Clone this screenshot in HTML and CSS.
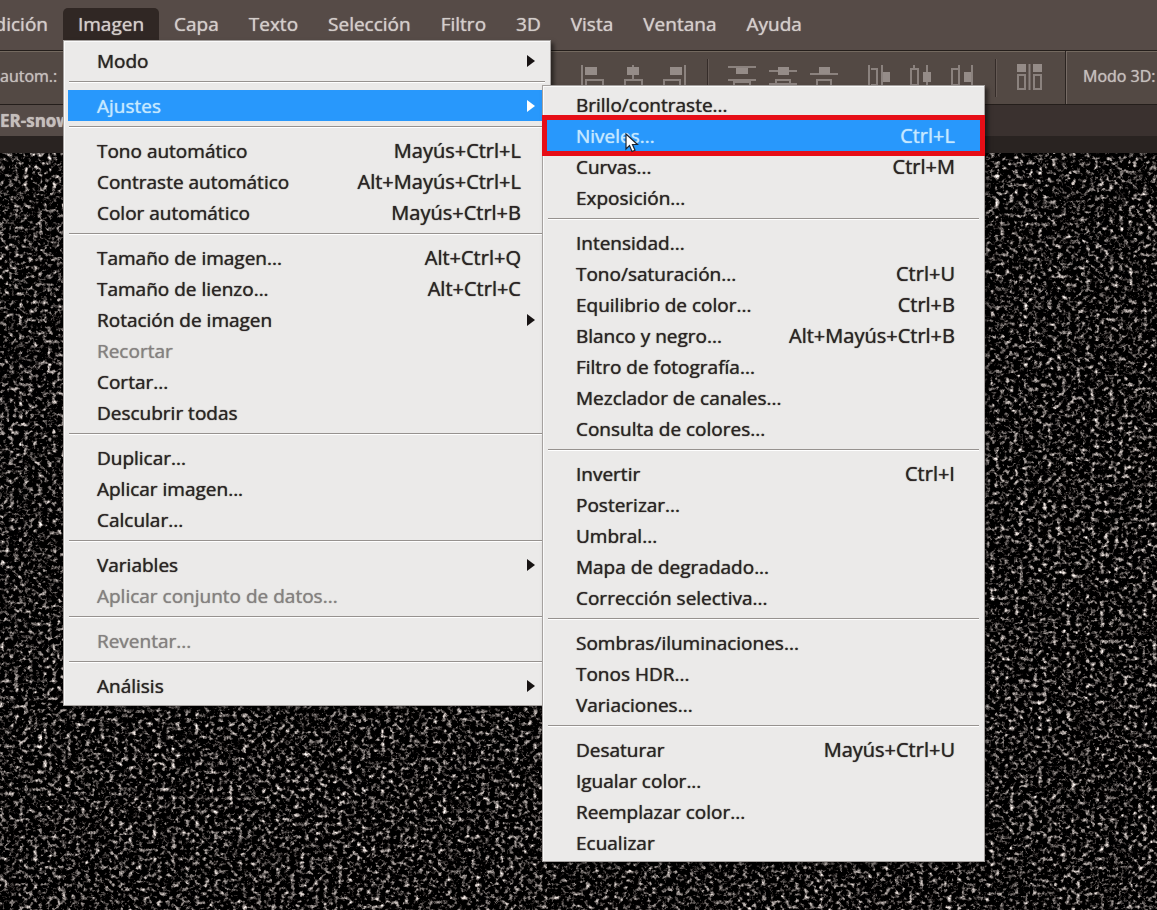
FILE: index.html
```html
<!DOCTYPE html>
<html lang="es">
<head>
<meta charset="utf-8">
<title>Imagen – Ajustes – Niveles</title>
<link rel="stylesheet" href="styles.css">
</head>
<body>
<div class="app">
  <nav class="menubar">
    <button class="menubar-item">Edición</button>
    <div class="menubar-group">
      <button class="menubar-item open">Imagen</button>
      <div class="menu main-menu">
        <button class="row">Modo<i class="arrow"></i></button>
        <hr>
        <div class="row-group">
          <button class="row active">Ajustes<i class="arrow"></i></button>
          <div class="menu sub-menu">
            <button class="row">Brillo/contraste...</button>
            <button class="row active marked">Niveles...<kbd>Ctrl+L</kbd>
              <svg class="pointer" width="14" height="20" viewBox="0 0 14 20"><path d="M1 1v15l3.500-3.500 2.500 6 3-1.300-2.500-5.700h5z" fill="#fff" stroke="#1c2430" stroke-width="1.200"/></svg>
            </button>
            <button class="row">Curvas...<kbd>Ctrl+M</kbd></button>
            <button class="row">Exposición...</button>
            <hr>
            <button class="row">Intensidad...</button>
            <button class="row">Tono/saturación...<kbd>Ctrl+U</kbd></button>
            <button class="row">Equilibrio de color...<kbd>Ctrl+B</kbd></button>
            <button class="row">Blanco y negro...<kbd>Alt+Mayús+Ctrl+B</kbd></button>
            <button class="row">Filtro de fotografía...</button>
            <button class="row">Mezclador de canales...</button>
            <button class="row">Consulta de colores...</button>
            <hr>
            <button class="row">Invertir<kbd>Ctrl+I</kbd></button>
            <button class="row">Posterizar...</button>
            <button class="row">Umbral...</button>
            <button class="row">Mapa de degradado...</button>
            <button class="row">Corrección selectiva...</button>
            <hr>
            <button class="row">Sombras/iluminaciones...</button>
            <button class="row">Tonos HDR...</button>
            <button class="row">Variaciones...</button>
            <hr>
            <button class="row">Desaturar<kbd>Mayús+Ctrl+U</kbd></button>
            <button class="row">Igualar color...</button>
            <button class="row">Reemplazar color...</button>
            <button class="row">Ecualizar</button>
          </div>
        </div>
        <hr>
        <button class="row">Tono automático<kbd>Mayús+Ctrl+L</kbd></button>
        <button class="row">Contraste automático<kbd>Alt+Mayús+Ctrl+L</kbd></button>
        <button class="row">Color automático<kbd>Mayús+Ctrl+B</kbd></button>
        <hr>
        <button class="row">Tamaño de imagen...<kbd>Alt+Ctrl+Q</kbd></button>
        <button class="row">Tamaño de lienzo...<kbd>Alt+Ctrl+C</kbd></button>
        <button class="row">Rotación de imagen<i class="arrow"></i></button>
        <button class="row" disabled>Recortar</button>
        <button class="row">Cortar...</button>
        <button class="row">Descubrir todas</button>
        <hr>
        <button class="row">Duplicar...</button>
        <button class="row">Aplicar imagen...</button>
        <button class="row">Calcular...</button>
        <hr>
        <button class="row">Variables<i class="arrow"></i></button>
        <button class="row" disabled>Aplicar conjunto de datos...</button>
        <hr>
        <button class="row" disabled>Reventar...</button>
        <hr>
        <button class="row">Análisis<i class="arrow"></i></button>
      </div>
    </div>
    <button class="menubar-item">Capa</button>
    <button class="menubar-item">Texto</button>
    <button class="menubar-item">Selección</button>
    <button class="menubar-item">Filtro</button>
    <button class="menubar-item">3D</button>
    <button class="menubar-item">Vista</button>
    <button class="menubar-item">Ventana</button>
    <button class="menubar-item">Ayuda</button>
  </nav>

  <div class="options">
    <span class="auto-label">autom.:</span>
    <div class="tools">
      <button class="tool" aria-label="Alinear bordes izquierdos"><svg viewBox="0 0 30 28"><path class="ln" d="M5 1v26M9 27v-11h17v11"/><path class="fl" d="M8 3h12v8H8z"/></svg></button>
      <button class="tool" aria-label="Alinear centros horizontales"><svg viewBox="0 0 30 28"><path class="ln" d="M15 1v15M7 27v-11h17v11"/><path class="fl" d="M9 3h12v8H9z"/></svg></button>
      <button class="tool" aria-label="Alinear bordes derechos"><svg viewBox="0 0 30 28"><path class="ln" d="M26 1v26M5 27v-11h16v11"/><path class="fl" d="M11 3h12v8H11z"/></svg></button>
    </div>
    <span class="divider"></span>
    <div class="tools">
      <button class="tool" aria-label="Distribuir bordes superiores"><svg viewBox="0 0 30 28"><path class="ln" d="M1 3h28M1 16h28M7 27v-9h16v9"/><path class="fl" d="M9 4h12v6H9z"/></svg></button>
      <button class="tool" aria-label="Distribuir centros verticales"><svg viewBox="0 0 30 28"><path class="ln" d="M1 7h28M1 20h28M8 27v-11h14v11"/><path class="fl" d="M10 3h11v8H10z"/></svg></button>
      <button class="tool" aria-label="Distribuir bordes inferiores"><svg viewBox="0 0 30 28"><path class="ln" d="M1 10h28M8 27v-11h14v11"/><path class="fl" d="M10 3h11v7H10z"/></svg></button>
    </div>
    <div class="tools last">
      <button class="tool" aria-label="Distribuir bordes izquierdos"><svg viewBox="0 0 30 28"><path class="ln" d="M4 1v26M17 1v26M6 5h6v16H6"/><path class="fl" d="M18 8h7v10h-7z"/></svg></button>
      <button class="tool" aria-label="Distribuir centros horizontales"><svg viewBox="0 0 30 28"><path class="ln" d="M8 1v4M8 21v6M21 1v26M5 5h7v16H5z"/><path class="fl" d="M17 8h8v10h-8z"/></svg></button>
      <button class="tool" aria-label="Distribuir bordes derechos"><svg viewBox="0 0 30 28"><path class="ln" d="M12 1v26M25 1v26M11 5H5v16h6"/><path class="fl" d="M17 8h7v10h-7z"/></svg></button>
    </div>
    <span class="divider"></span>
    <button class="tool auto-align" aria-label="Alinear capas automáticamente"><svg viewBox="0 0 30 28"><path class="fl" d="M2 0h9v8H2zM18 0h9v8h-9z"/><path class="ln" d="M14.500 0v26M3 11h7v14H3zM19 11h7v14h-7z"/></svg></button>
    <div class="mode">Modo 3D:</div>
  </div>

  <div class="tabs"><button class="tab">ER-snow</button></div>
  <div class="band"></div>
  <main class="canvas">
    <svg class="grain" aria-hidden="true">
      <filter id="snow" x="0" y="0" width="100%" height="100%" color-interpolation-filters="sRGB">
        <feTurbulence type="fractalNoise" baseFrequency="0.21 0.23" numOctaves="3" seed="7"/>
        <feColorMatrix values="1.900 1.900 0 0 -1.880  1.840 1.840 0 0 -1.830  1.800 1.800 0 0 -1.790  0 0 0 0 1"/>
        <feGaussianBlur stdDeviation="0.600"/>
      </filter>
      <rect width="100%" height="100%" filter="url(#snow)"/>
    </svg>
  </main>
</div>
</body>
</html>
```
FILE: styles.css
```css
* { box-sizing: border-box; }

body {
  margin: 0;
  background: #000;
  font-family: "Open Sans", "Noto Sans", sans-serif;
  font-size: 19px;
  text-shadow: 0 0 1px currentColor;
  overflow: hidden;
}

button, kbd { font: inherit; color: inherit; text-shadow: inherit; }

kbd { font-size: 20px; }

button {
  margin: 0;
  padding: 0;
  border: 0;
  background: none;
  white-space: nowrap;
}

.app {
  display: flex;
  flex-direction: column;
  min-height: 100vh;
}

.menubar {
  display: flex;
  align-items: flex-end;
  height: 50px;
  padding-bottom: 10px;
  margin-left: -31px;
  background: #564b47;
  color: #d3cdca;
}

.menubar-group { position: relative; z-index: 2; }

.menubar-item {
  display: block;
  height: 32px;
  padding: 0 15px;
  line-height: 30px;
}

.menubar-item.open {
  border-radius: 5px 5px 0 0;
  background: #302724;
}

.menu {
  position: absolute;
  padding: 4px;
  border: 1px solid #a5a19f;
  background: #ebeae9;
  box-shadow: inset 1px 1px #fafafa, 3px 3px 4px rgba(0, 0, 0, 0.5);
  color: #2b2524;
}

.main-menu {
  top: 100%;
  left: 0;
  width: 488px;
}

.sub-menu {
  top: -5px;
  left: 474px;
  z-index: 1;
  width: 443px;
  padding: 3px 4px;
}

.row-group { position: relative; }

.row {
  display: flex;
  align-items: center;
  justify-content: space-between;
  position: relative;
  width: 100%;
  height: 31px;
  padding: 0 25px 0 29px;
  line-height: 30px;
  text-align: left;
}

.row:disabled { color: #858180; }

.row.active {
  background: #2898fc;
  color: #c5e8ff;
}

.arrow {
  border: 6px solid transparent;
  border-left: 8px solid #171313;
  border-right: 0;
}

.main-menu > .row:has(.arrow), .row-group > .row { padding-right: 11px; }
.active > .arrow { border-left-color: #fff; }

.row.marked {
  overflow: visible;
  outline: 5px solid #e60e17;
}

.pointer {
  position: absolute;
  top: 13px;
  left: 78px;
}

hr {
  height: 2px;
  margin: 5px 1px 7px;
  border: 0;
  border-top: 1px solid #96928f;
  background: #fff;
}

.options {
  display: flex;
  align-items: center;
  height: 55px;
  border-top: 1px solid #241e1b;
  border-bottom: 1px solid #241e1b;
  background: #534944;
  box-shadow: inset 0 1px #73695f;
  color: #c5bfbc;
  font-size: 16px;
}

.auto-label {
  width: 577px;
  padding-bottom: 4px;
}

.tools {
  display: flex;
  gap: 11px;
}

.tools.last { margin-left: 26px; }

.tool {
  width: 30px;
  height: 28px;
}

.tool svg {
  display: block;
  width: 30px;
  height: 28px;
}

.ln { fill: none; stroke: #8b827e; stroke-width: 2; }
.fl { fill: #958c88; }

.divider {
  width: 2px;
  height: 38px;
  margin: 0 18px;
  border-left: 1px solid #352c29;
  border-right: 1px solid #655a55;
}

.auto-align { margin-right: 20px; }

.mode {
  flex: 1;
  align-self: stretch;
  padding-left: 17px;
  border-left: 1px solid #2b2421;
  box-shadow: inset 1px 0 #776c66;
  line-height: 50px;
  white-space: nowrap;
}

.tabs {
  display: flex;
  height: 31px;
  background: #3a312f;
}

.tab {
  width: 80px;
  background: #554b47;
  color: #c5bfbc;
  font-size: 17px;
  font-weight: bold;
  text-align: left;
}

.band {
  height: 17px;
  background: #292321;
}

.canvas {
  display: flex;
  flex: 1;
  background: #000;
}

.grain {
  flex: 1;
  width: 100%;
}
```
